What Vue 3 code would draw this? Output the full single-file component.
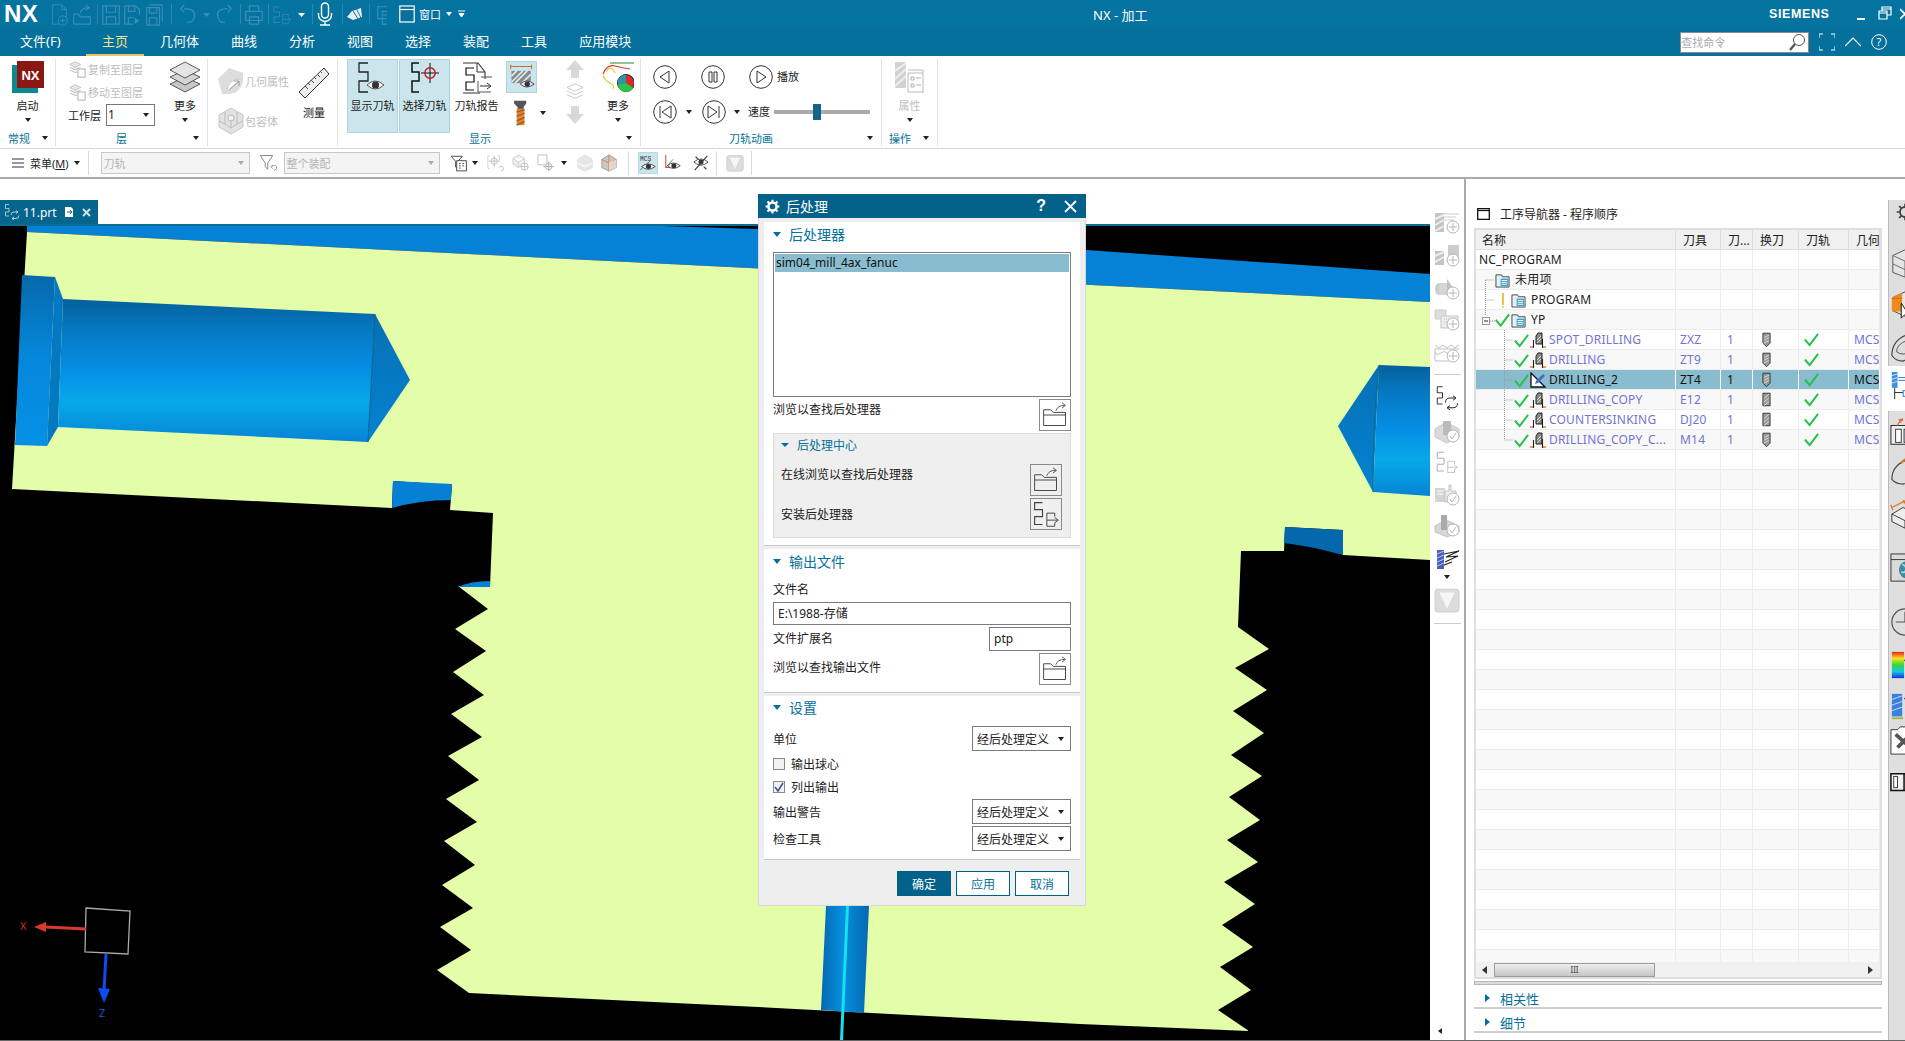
<script setup>
const qat = [
  ['i-new', 50], ['i-open', 72], ['i-save', 101], ['i-saveas', 123], ['i-saveall', 144],
  ['i-undo', 178], ['i-redo', 214], ['i-print', 244], ['i-tpout', 272], ['i-win', 375]
]
const qatSeps = [97, 171, 240, 268, 312, 342, 369]
const menus = ['主页', '几何体', '曲线', '分析', '视图', '选择', '装配', '工具', '应用模块']

const rows = [
  { kind: 'root', name: 'NC_PROGRAM' },
  { kind: 'unused', name: '未用项' },
  { kind: 'prog', name: 'PROGRAM' },
  { kind: 'yp', name: 'YP' },
  { kind: 'op', name: 'SPOT_DRILLING', tool: 'ZXZ', bit: 'i-bit' },
  { kind: 'op', name: 'DRILLING', tool: 'ZT9', bit: 'i-bit' },
  { kind: 'op', name: 'DRILLING_2', tool: 'ZT4', bit: 'i-bit', sel: true },
  { kind: 'op', name: 'DRILLING_COPY', tool: 'E12', bit: 'i-bit2' },
  { kind: 'op', name: 'COUNTERSINKING', tool: 'DJ20', bit: 'i-bit2' },
  { kind: 'op', name: 'DRILLING_COPY_C...', tool: 'M14', bit: 'i-bit', last: true }
]
const blank = Array.from({ length: 26 }, (_, i) => i)

const sideIcons = [
  { s: 'i-g1', h: 33 }, { s: 'i-g2', h: 33 }, { s: 'i-g3', h: 31 }, { s: 'i-g4', h: 32 }, { s: 'i-g5', h: 32 }
]
const sideIcons2 = [
  { s: 'i-tpsync', h: 34 }, { s: 'i-g6', h: 30 }, { s: 'i-tpoutg', h: 32 }, { s: 'i-g7', h: 32 }, { s: 'i-g8', h: 34 }, { s: 'i-gouge', h: 24 }
]

const railA = [
  { s: 'r-gear', m: -3 }, { s: 'r-cube', m: 21 }, { s: 'r-cubeo', m: 12 }, { s: 'r-bowl', m: 13 }
]
const railB = [
  { s: 'r-mach', m: 7 }, { s: 'r-bowlo', m: 7 }, { s: 'r-dim', m: 15 }, { s: 'r-globe', m: 23 },
  { s: 'r-clock', m: 24 }, { s: 'r-spec', m: 13 }, { s: 'r-bluet2', m: 12 }, { s: 'r-wrench', m: 3 }, { s: 'r-book', m: 13 }
]

const teethRight = '1238,627 1269,649 1235,668 1267,690 1233,711 1264,733 1231,755 1262,776 1229,797 1260,820 1227,840 1258,862 1224,882 1255,904 1222,925 1253,947 1220,967 1251,990 1218,1010 1249,1031'
const teethLeft = '469,993 437,970 471,950 440,927 473,908 442,885 475,865 444,841 477,822 446,799 479,780 448,756 482,737 451,714 484,695 453,672 486,651 455,629 488,609 458,586 490,587'
const body = `27,232 1430,302 1430,560 1343,555 1343,530 1285,527 1284,551 1241,551 ${teethRight} 1080,1024 758,1007 ${teethLeft} 493,513 450,510 452,485 393,481 392,508 12,489`
</script>

<template>
  <div class="app">
    <svg class="defs" aria-hidden="true">
      <defs>
        <linearGradient id="cyl" x1="0" y1="0" x2="0" y2="1">
          <stop offset="0" stop-color="#05609c"/><stop offset=".2" stop-color="#0677c0"/>
          <stop offset=".5" stop-color="#058fe6"/><stop offset=".72" stop-color="#07a9e8"/><stop offset="1" stop-color="#0684d6"/>
        </linearGradient>
        <linearGradient id="cbore" x1="0" y1="0" x2="0" y2="1">
          <stop offset="0" stop-color="#0668aa"/><stop offset=".5" stop-color="#0588dc"/><stop offset="1" stop-color="#0590e6"/>
        </linearGradient>
        <linearGradient id="cone" x1="0" y1="0" x2="0" y2="1">
          <stop offset="0" stop-color="#0670b4"/><stop offset="1" stop-color="#0582d2"/>
        </linearGradient>
        <linearGradient id="drill" x1="0" y1="0" x2="1" y2="0">
          <stop offset="0" stop-color="#0468b0"/><stop offset=".45" stop-color="#0590e0"/><stop offset="1" stop-color="#0468b0"/>
        </linearGradient>
        <linearGradient id="spec" x1="0" y1="0" x2="0" y2="1">
          <stop offset="0" stop-color="#e8201c"/><stop offset=".25" stop-color="#f5e51a"/><stop offset=".5" stop-color="#35d63c"/>
          <stop offset=".75" stop-color="#10c8e8"/><stop offset="1" stop-color="#1230e0"/>
        </linearGradient>

        <symbol id="i-tpshow" viewBox="0 0 32 32"><path d="M11 1H2v9h9v9H2v11h9" fill="none" stroke="#222" stroke-width="1.3"/><path d="M10 23q8-8 17 0q-9 8-17 0z" fill="#fff" stroke="#555"/><circle cx="18.5" cy="23" r="3.6" fill="#333"/></symbol>
        <symbol id="i-tpsel" viewBox="0 0 32 32"><path d="M10 1H3v9h7v9H3v11h7" fill="none" stroke="#111" stroke-width="1.5"/><path d="M12 11h18M21 1v20" stroke="#111" stroke-width="1"/><circle cx="21" cy="11" r="5.2" fill="none" stroke="#d0101c" stroke-width="1.4"/></symbol>
        <symbol id="i-tpreport" viewBox="0 0 32 32"><path d="M2 1h15l7 9v7M19 31H2z" fill="none" stroke="#333" stroke-width="1.1"/><path d="M16 1v9h8" fill="none" stroke="#333"/><path d="M13 6H5v7h8v7H5v8h8" fill="none" stroke="#111" stroke-width="1.2"/><path d="M20 15h11M17 19v11h13" fill="none" stroke="#555"/><path d="M19 24h10M26 21l4 3-4 3" fill="none" stroke="#333"/></symbol>
        <symbol id="i-tpout" viewBox="0 0 32 32"><path d="M12 3H3v8h9v8H3v9h9" fill="none" stroke="currentColor" stroke-width="1.3"/><path d="M17 15v15h9V26M17 15h9v4M17 23h12M26 20l4 3-4 3" fill="none" stroke="currentColor" stroke-width="1.1"/></symbol>
        <symbol id="i-tpoutg" viewBox="0 0 32 32"><path d="M12 3H3v8h9v8H3v9h9" fill="none" stroke="#aaa" stroke-width="1.3"/><path d="M17 15v15h9V26M17 15h9v4M17 23h12M26 20l4 3-4 3" fill="none" stroke="#bbb" stroke-width="1.1"/></symbol>
        <symbol id="i-tpsync" viewBox="0 0 32 32"><path d="M10 1H3v8h7v7H3v8h7" fill="none" stroke="currentColor" stroke-width="1.2"/><path d="M14 22q0-6 6-6h7M24 13l4 3-4 3M30 23q0 6-6 6h-7M20 32l-4-3 4-3" fill="none" stroke="currentColor" stroke-width="1.3"/></symbol>
        <symbol id="i-folder" viewBox="0 0 32 32"><path d="M3 10h8l3 3h14v15H3zM3 16h25" fill="none" stroke="#444" stroke-width="1.1"/><path d="M17 11q2-6 10-6M24 2l4 3-4 3" fill="none" stroke="#555" stroke-width="1.1"/></symbol>
        <symbol id="i-filt" viewBox="0 0 32 32"><path d="M2 4h20l-8 12v10l-4-4v-6z" fill="#fff" stroke="#888" stroke-width="1.6"/><path d="M20 22q6-4 8 0t-4 6M22 19l-3 3 3 3" fill="none" stroke="#888" stroke-width="1.4"/></symbol>
        <symbol id="i-filt2" viewBox="0 0 32 32"><path d="M2 4h20l-8 9v14l-4-4V13z" fill="#fff" stroke="#222" stroke-width="1.4"/><rect x="12" y="12" width="17" height="18" fill="#fff" stroke="#222" stroke-width="1.4"/><path d="M16 17h3M16 21h3M16 25h3M22 17h3M22 21h3" stroke="#222" stroke-width="1.4"/></symbol>

        <symbol id="i-new" viewBox="0 0 20 24"><path d="M2 1h10l5 5v10M2 1v21h7M12 1v5h5" fill="none" stroke="#3b8db4"/><circle cx="13" cy="18" r="5" fill="none" stroke="#3b8db4"/><path d="M10 18h6M13 15v6" stroke="#3b8db4"/></symbol>
        <symbol id="i-open" viewBox="0 0 20 24"><path d="M1 11h5l2 3h11v8H1zM8 10q2-6 9-6M14 1l4 3-4 3" fill="none" stroke="#3b8db4" stroke-width="1.2"/></symbol>
        <symbol id="i-save" viewBox="0 0 20 24"><path d="M1 2h18v20H1zM5 2v7h10V2M5 22v-8h10v8" fill="none" stroke="#3b8db4" stroke-width="1.3"/></symbol>
        <symbol id="i-saveas" viewBox="0 0 20 24"><path d="M1 2h12l4 4v6M1 2v20h9M5 2v6h7V2M5 22v-7h6" fill="none" stroke="#3b8db4" stroke-width="1.3"/><path d="M12 15l5 3-5 4z" fill="#3b8db4"/></symbol>
        <symbol id="i-saveall" viewBox="0 0 20 24"><path d="M5 1h14v18M2 4h14v19H2zM5 4v6h8V4M5 23v-8h8v8" fill="none" stroke="#3b8db4" stroke-width="1.2"/></symbol>
        <symbol id="i-undo" viewBox="0 0 20 24"><path d="M6 5Q18 5 17 13t-8 7M6 1L2 5l4 4" fill="none" stroke="#3b8db4" stroke-width="1.4"/></symbol>
        <symbol id="i-redo" viewBox="0 0 20 24"><path d="M14 5Q2 5 3 13t8 7M14 1l4 4-4 4" fill="none" stroke="#3b8db4" stroke-width="1.4"/></symbol>
        <symbol id="i-print" viewBox="0 0 20 24"><path d="M5 2h10v6H5zM1 8h18v10H1zM5 14h10v8H5z" fill="none" stroke="#3b8db4" stroke-width="1.3"/></symbol>
        <symbol id="i-win" viewBox="0 0 20 24"><path d="M2 3h11v13H2zM7 8h11v14H7zM7 12h11" fill="none" stroke="#3b8db4" stroke-width="1.2"/></symbol>

        <symbol id="i-stack" viewBox="0 0 32 32"><path d="M16 16L1 23l15 8 15-8z" fill="#c8c8c8" stroke="#333" stroke-width=".8"/><path d="M16 9L1 16l15 8 15-8z" fill="#d4d4d4" stroke="#333" stroke-width=".8"/><path d="M16 1L1 9l15 8 15-8z" fill="#e4e4e4" stroke="#333" stroke-width=".8"/></symbol>
        <symbol id="i-ruler" viewBox="0 0 32 32"><path d="M26 1l5 6L7 31l-6-6z" fill="#eee" stroke="#333" stroke-width="1"/><path d="M7 19l3 3M10 16l2 2M13 13l3 3M16 10l2 2M19 7l3 3M22 4l2 2" stroke="#444"/></symbol>
        <symbol id="i-copyl" viewBox="0 0 20 20"><path d="M8 2L2 5l6 3 6-3zM2 8l6 3 6-3M2 11l6 3 3-1" fill="#e8e8e8" stroke="#bbb"/><rect x="11" y="10" width="8" height="9" fill="#fff" stroke="#aaa"/></symbol>
        <symbol id="i-geom" viewBox="0 0 28 28"><path d="M12 1l14 5v8q-2 12-13 13H5L1 12z" fill="#ddd"/><path d="M10 24Q11 12 24 12" fill="#fff" stroke="#ccc"/><path d="M12 23l10-9M17 14h5v5" fill="none" stroke="#999"/></symbol>
        <symbol id="i-box" viewBox="0 0 28 28"><path d="M14 1l12 7v12l-12 7L2 20V8z" fill="#e2e2e2" stroke="#c6c6c6"/><path d="M8 5v12l6 4 6-4V5M2 14l6 3M26 14l-6 3M14 11v10" fill="none" stroke="#bbb"/><circle cx="14" cy="11" r="3" fill="#f3f3f3" stroke="#bbb"/></symbol>
        <symbol id="i-tphatch" viewBox="0 0 32 32"><rect x="4" y="9" width="22" height="14" fill="#888"/><path d="M4 15l6-6M8 23L22 9M16 23l10-10M4 22L17 9" stroke="#dbe9ee" stroke-width="2"/><path d="M3 4h24M3 2v5M27 2v5" fill="none" stroke="#c76b1e" stroke-width="1.1"/><path d="M14 24q7-7 16 0q-9 7-16 0z" fill="#dde" stroke="#444"/><circle cx="22" cy="24" r="3" fill="#333"/></symbol>
        <symbol id="i-endmill" viewBox="0 0 18 30"><path d="M1 1h14v3l-3 4v3H5V8L1 4z" fill="#555"/><rect x="4" y="10" width="9" height="19" fill="#e08535"/><path d="M4 14l9-3M4 19l9-4M4 24l9-4M4 29l9-4" stroke="#a15a1e" stroke-width="1.5"/></symbol>
        <symbol id="i-up" viewBox="0 0 20 20"><path d="M10 1L1 11h5v8h8v-8h5z" fill="#d8d8d8"/></symbol>
        <symbol id="i-down" viewBox="0 0 20 20"><path d="M10 19L1 9h5V1h8v8h5z" fill="#d8d8d8"/></symbol>
        <symbol id="i-lay" viewBox="0 0 20 20"><path d="M10 1L1 5l9 4 9-4zM1 9l9 4 9-4M1 13l9 4 9-4" fill="none" stroke="#c6c6c6"/></symbol>
        <symbol id="i-more" viewBox="0 0 32 32"><path d="M8 2h24" stroke="#208a30" stroke-width="1"/><path d="M1 13Q5 3 13 5t15 3" fill="none" stroke="#d63a2a" stroke-width="1.2"/><path d="M1 14q2 6 7 8t3 6M4 10q6-6 9 2" fill="none" stroke="#e8c83a" stroke-width="1.2"/><circle cx="24" cy="22" r="8.5" fill="#d72b28" stroke="#222"/><path d="M24 22V13.5a8.5 8.5 0 0 0-8.3 10z" fill="#2f93a8"/><path d="M24 22l-8.3 1.5a8.5 8.5 0 0 0 15.6 3.5z" fill="#23c84a"/></symbol>
        <symbol id="i-oper" viewBox="0 0 32 32"><rect x="1" y="1" width="11" height="26" rx="1" fill="#d2d2d2"/><path d="M1 10L12 2M1 18L12 8M1 25l11-10" stroke="#eee" stroke-width="2"/><path d="M14 9h15v24M14 12h15M14 12v19h15" fill="none" stroke="#bbb"/><path d="M17 16h3v3h-3zM17 23h3v3h-3zM22 17h5M22 24h5" fill="none" stroke="#b0b0b0"/></symbol>

        <symbol id="i-tb1" viewBox="0 0 20 20"><path d="M3 2H1v14h2M12 2h2v5" fill="none" stroke="#ccc"/><circle cx="8" cy="8" r="3.5" fill="none" stroke="#bbb"/><path d="M2 8h12M8 2v12" stroke="#bbb"/><path d="M13 15q3-3 5 0t-3 4" fill="none" stroke="#bbb"/></symbol>
        <symbol id="i-tb2" viewBox="0 0 20 20"><path d="M7 1l7 4v6l-7 4-6-4V5zM1 5l6 4 7-4M7 9v6" fill="#eee" stroke="#ccc"/><circle cx="14" cy="14" r="4" fill="#fff" stroke="#bbb"/><path d="M10 14h8M14 10v8" stroke="#bbb"/></symbol>
        <symbol id="i-tb3" viewBox="0 0 20 20"><path d="M1 1h10v11H1z" fill="none" stroke="#bbb"/><circle cx="13" cy="14" r="3.5" fill="#fff" stroke="#aaa"/><path d="M7 14h12M13 8v11" stroke="#aaa"/></symbol>
        <symbol id="i-tb4" viewBox="0 0 20 20"><path d="M10 1l8 5v9l-8 4-8-4V6z" fill="#e6e6e6" stroke="#ddd"/><path d="M2 10l8 4 8-4" stroke="#f5f5f5" stroke-width="2" fill="none"/></symbol>
        <symbol id="i-tb5" viewBox="0 0 20 20"><path d="M10 1l8 5v9l-8 4-8-4V6z" fill="#c8c8c8" stroke="#999"/><path d="M10 9v10M2 6l8 4 8-4M10 1v8" fill="none" stroke="#d08040"/><path d="M18 6v9l-8 4V9z" fill="#e8d5c5"/></symbol>
        <symbol id="i-mcs" viewBox="0 0 20 20"><text x="1" y="8" font-size="7" font-family="Liberation Mono" fill="#333">MCS</text><path d="M1 18L12 8" stroke="#2a9a40"/><path d="M3 14q7-6 15 0q-8 6-15 0z" fill="#eef" stroke="#444"/><circle cx="10.5" cy="14" r="2.8" fill="#333"/></symbol>
        <symbol id="i-eye" viewBox="0 0 20 20"><path d="M2 1v14h12" fill="none" stroke="#d03030"/><path d="M2 15L10 6" stroke="#2a9a40"/><path d="M4 13q6-6 14 0q-8 6-14 0z" fill="#fff" stroke="#444"/><circle cx="11" cy="13" r="2.8" fill="#333"/></symbol>
        <symbol id="i-noeye" viewBox="0 0 20 20"><path d="M2 9q8-7 16 0q-8 7-16 0z" fill="#fff" stroke="#444"/><circle cx="10" cy="9" r="2.8" fill="#333"/><path d="M3 18L17 2M4 3l3 3M13 14l3 3" stroke="#444" stroke-width="1.4"/></symbol>
        <symbol id="i-v" viewBox="0 0 24 24"><rect x="1" y="2" width="22" height="21" rx="3" fill="#dcdcdc" stroke="#cfcfcf"/><path d="M5 5h14l-7 15z" fill="#f6f6f6"/></symbol>

        <symbol id="i-g1" viewBox="0 0 26 24"><rect x="1" y="2" width="9" height="19" fill="#c4c4c4"/><path d="M1 8L10 4M1 14l9-5M1 20l9-5" stroke="#eee" stroke-width="2"/><path d="M10 3h15M10 6h12M10 9h10" stroke="#ccc"/><circle cx="19" cy="16" r="6" fill="#fff" stroke="#b5b5b5"/><path d="M15 16h8M19 12v8" stroke="#b5b5b5"/></symbol>
        <symbol id="i-g2" viewBox="0 0 26 24"><rect x="1" y="7" width="9" height="14" fill="#c4c4c4"/><path d="M1 12l9-4M1 18l9-5" stroke="#eee" stroke-width="2"/><rect x="14" y="1" width="11" height="13" fill="#ccc"/><circle cx="19" cy="16" r="6" fill="#fff" stroke="#b5b5b5"/><path d="M15 16h8M19 12v8" stroke="#b5b5b5"/></symbol>
        <symbol id="i-g3" viewBox="0 0 26 24"><ellipse cx="5" cy="12" rx="4" ry="6" fill="#ccc"/><rect x="5" y="6" width="8" height="12" fill="#d6d6d6"/><path d="M13 2l7 10-7 5z" fill="#c2c2c2"/><circle cx="19" cy="16" r="6" fill="#fff" stroke="#b5b5b5"/><path d="M15 16h8M19 12v8" stroke="#b5b5b5"/></symbol>
        <symbol id="i-g4" viewBox="0 0 26 24"><path d="M1 2h11v9H1z" fill="#ddd" stroke="#ccc"/><path d="M7 8h17v12H7z" fill="#eee" stroke="#c4c4c4"/><path d="M10 11h10M10 14h4" stroke="#bbb" stroke-dasharray="1 1"/><circle cx="19" cy="16" r="6" fill="#fff" stroke="#b5b5b5"/><path d="M15 16h8M19 12v8" stroke="#b5b5b5"/></symbol>
        <symbol id="i-g5" viewBox="0 0 26 24"><path d="M1 5l4 3 4-3 4 3 4-3 4 3 4-3M1 9h24M1 9v12h14" fill="none" stroke="#c0c0c0"/><path d="M1 13q3 3 6 0t6 0 6 0" fill="none" stroke="#c0c0c0"/><circle cx="19" cy="16" r="6" fill="#fff" stroke="#b5b5b5"/><path d="M15 16h8M19 12v8" stroke="#b5b5b5"/></symbol>
        <symbol id="i-g6" viewBox="0 0 26 24"><path d="M1 9l11-7 13 7v8l-12 6-12-6z" fill="#dadada" stroke="#c8c8c8"/><rect x="9" y="1" width="8" height="14" fill="#bbb"/><circle cx="19" cy="16" r="6" fill="#fff" stroke="#b5b5b5"/><path d="M16 16l2 3 4-6" fill="none" stroke="#b5b5b5"/></symbol>
        <symbol id="i-g7" viewBox="0 0 26 24"><rect x="1" y="6" width="10" height="14" fill="#d4d4d4"/><path d="M3 9h6M3 12h6" stroke="#fff"/><path d="M11 9h4V3h2v6h5v11H11z" fill="#eee" stroke="#c2c2c2"/><circle cx="19" cy="17" r="6" fill="#fff" stroke="#b5b5b5"/><path d="M16 17l2 3 4-6" fill="none" stroke="#b5b5b5"/></symbol>
        <symbol id="i-g8" viewBox="0 0 26 24"><path d="M1 12l11-6 13 6v6l-12 5-12-5z" fill="#d6d6d6" stroke="#c4c4c4"/><rect x="7" y="1" width="6" height="15" fill="#aaa"/><circle cx="19" cy="16" r="6" fill="#fff" stroke="#b5b5b5"/><path d="M16 16l2 3 4-6" fill="none" stroke="#b5b5b5"/></symbol>
        <symbol id="i-gouge" viewBox="0 0 26 24"><rect x="3" y="2" width="7" height="19" fill="#4c5fbd"/><path d="M3 6l7-3M3 10l7-3M3 14l7-3M3 18l7-3" stroke="#b8c4f0"/><path d="M10 6L25 3 12 9l12-1-13 6M10 17l8-3" fill="none" stroke="#222" stroke-width="1.2"/></symbol>

        <symbol id="i-fold" viewBox="0 0 16 16"><path d="M1 2h6l1 2h7v11H1z" fill="#e4f0f6" stroke="#444"/><rect x="6" y="6" width="8" height="8" fill="#3aa0c8"/><path d="M7 8h6M7 10h6M7 12h6" stroke="#fff"/></symbol>
        <symbol id="i-op" viewBox="0 0 16 16"><path d="M0 15h4M12 15h4" stroke="#e08535" stroke-width="1.300"/><path d="M3.500 8v8M12.500 7v9" stroke="#222" stroke-width="1.100"/><path d="M6 12V4l2-3h4v11z" fill="#8a8a8a" stroke="#222"/><path d="M7 8l4-4M7 11l4-4" stroke="#d8d8d8"/></symbol>
        <symbol id="i-opedit" viewBox="0 0 16 16"><path d="M1 1v14h14L8 8z" fill="#fff" stroke="#111" stroke-width="1.3"/><path d="M6 9l7-7 2 2-7 7-3 1z" fill="#3b6fc8"/></symbol>
        <symbol id="i-check" viewBox="0 0 16 16"><path d="M1 8l5 6L15 2" fill="none" stroke="#27c24a" stroke-width="2.100"/></symbol>
        <symbol id="i-bit" viewBox="0 0 10 16"><path d="M1 1h8v11l-4 4-4-4z" fill="#999" stroke="#222" stroke-width=".9"/><path d="M2 6l6-3M2 9l6-3M2 12l6-3" stroke="#ddd"/></symbol>
        <symbol id="i-bit2" viewBox="0 0 10 16"><path d="M1 1h8v14H1z" fill="#999" stroke="#222" stroke-width=".9"/><path d="M2 7l6-5M2 11l6-5M2 15l6-5" stroke="#ddd"/></symbol>

        <symbol id="r-gear" viewBox="-6 -6 36 36"><circle cx="12" cy="12" r="6" fill="none" stroke="#444" stroke-width="2.200"/><path d="M12 2v4M12 18v4M2 12h4M18 12h4M5 5l3 3M16 16l3 3M19 5l-3 3M8 16l-3 3" stroke="#444" stroke-width="2"/></symbol>
        <symbol id="r-cube" viewBox="0 0 32 32"><path d="M3 8l13-6 13 6v18l-13 5-13-5z" fill="#e4e4e4" stroke="#555"/><path d="M3 8l13 6 13-6M16 14v17M3 17l13 6 13-6" fill="none" stroke="#666"/></symbol>
        <symbol id="r-cubeo" viewBox="0 0 32 32"><path d="M3 8l13-6 13 6v14l-13 6-13-6z" fill="#e8e8e8" stroke="#444"/><path d="M2 8l11-5v20H2z" fill="#ef8a1d"/><path d="M2 9h11" stroke="#c96a0a"/><path d="M12 14v16l4-4 5 2z" fill="#fff" stroke="#111"/></symbol>
        <symbol id="r-bowl" viewBox="0 0 32 32"><path d="M2 24Q2 8 18 2l12 0v20L14 30Q6 30 2 24z" fill="#ddd" stroke="#444" stroke-width="1.200"/><path d="M7 20q0-8 11-12M7 20q7 5 14 0" fill="none" stroke="#555"/></symbol>
        <symbol id="r-flow" viewBox="0 0 32 32"><rect x="2" y="1" width="6" height="17" fill="#3e8fe0"/><path d="M2 5l6-2M2 9l6-2M2 13l6-2" stroke="#cfe6ff"/><path d="M9 7h12M9 10h8" stroke="#2277cc"/><path d="M5 18v12M5 23h9" stroke="#222"/><rect x="14" y="21" width="8" height="6" fill="none" stroke="#2277cc"/></symbol>
        <symbol id="r-mach" viewBox="0 0 32 32"><rect x="1" y="8" width="24" height="20" fill="#eee" stroke="#222"/><rect x="6" y="12" width="6" height="14" fill="#fff" stroke="#333"/><rect x="15" y="12" width="6" height="14" fill="#cfe3f0" stroke="#333"/><path d="M8 8q2-5 6-6M14 1l-4 1 2 3" fill="none" stroke="#e07030" stroke-width="1.400"/></symbol>
        <symbol id="r-bowlo" viewBox="0 0 32 32"><path d="M2 26Q2 12 16 6l14 2v18L14 31Q6 31 2 26z" fill="#ddd" stroke="#444" stroke-width="1.200"/><path d="M12 9q3-5 6-5M18 1v6" fill="none" stroke="#e07a20" stroke-width="2"/></symbol>
        <symbol id="r-dim" viewBox="0 0 32 32"><path d="M2 15l12-7 14 7v8l-12 7-14-7z" fill="#eee" stroke="#333"/><path d="M2 15l14 7 12-7M16 22v8" fill="none" stroke="#333"/><path d="M2 8L16 1M1 5l2 6M14 0l3 5" fill="none" stroke="#e07a20" stroke-width="1.400"/></symbol>
        <symbol id="r-globe" viewBox="0 0 32 32"><rect x="1" y="1" width="31" height="29" fill="#dadada" stroke="#333"/><path d="M1 7h31" stroke="#333"/><circle cx="19" cy="18" r="9.500" fill="#3c8aa0"/><path d="M13 12q5 2 4 6t-5 2M22 11q4 3 2 8" stroke="#a9d3dd" stroke-width="2" fill="none"/></symbol>
        <symbol id="r-clock" viewBox="0 0 32 32"><circle cx="16" cy="16" r="14" fill="none" stroke="#555" stroke-width="1.300"/><path d="M16 5v11H6" fill="none" stroke="#555" stroke-width="1.300"/></symbol>
        <symbol id="r-spec" viewBox="0 0 32 32"><rect x="2" y="2" width="13" height="28" fill="url(#spec)"/><path d="M16 10l10 10-6 6" stroke="#111" stroke-width="3" fill="none"/></symbol>
        <symbol id="r-bluet2" viewBox="0 0 32 32"><rect x="2" y="2" width="11" height="24" fill="#3d7fdc"/><path d="M2 8l11-4M2 14l11-4M2 20l11-4" stroke="#c7e0f8"/><path d="M2 28h12" stroke="#a0b840" stroke-width="2"/><path d="M16 6l10 10-6 6" stroke="#111" stroke-width="3" fill="none"/></symbol>
        <symbol id="r-wrench" viewBox="0 0 32 32"><path d="M1 5h7l3-3h8l3 3h9v26H1z" fill="#fff" stroke="#333"/><path d="M6 10l18 16M24 8L8 24" stroke="#555" stroke-width="4"/></symbol>
        <symbol id="r-book" viewBox="0 0 32 32"><path d="M1 6h14v18H1zM15 6h14v18H15z" fill="#f2f2f2" stroke="#111" stroke-width="1.600"/><rect x="4" y="9" width="4" height="12" fill="#fff" stroke="#333"/><rect x="18" y="3" width="8" height="10" fill="#f0cf3a"/></symbol>
      </defs>
    </svg>

    <!-- title bar -->
    <header class="titlebar">
      <span class="logo">NX</span>
      <svg class="qat" width="342" height="28" viewBox="45 0 342 28">
        <line v-for="x in qatSeps" :key="x" :x1="x + .5" :x2="x + .5" y1="4" y2="24" stroke="#2a87ae"/>
        <use v-for="[id, x] in qat" :key="id" :href="'#' + id" :x="x" y="4" width="20" height="22" color="#3b8db4"/>
        <path d="M203 13h7l-3.500 4z" fill="#3b8db4"/>
        <path d="M298 13h7l-3.500 4z" fill="#fff"/>
        <path d="M325 3a3.500 3.500 0 0 1 3.500 3.500v8a3.500 3.500 0 0 1-7 0v-8A3.500 3.500 0 0 1 325 3zM318.500 13v2a6.500 6.500 0 0 0 13 0v-2M325 21v4M320 25h10" fill="none" stroke="#fff" stroke-width="1.400"/>
        <path d="M347 17l5-6 9-3 1 9-9 3z" fill="#e8f2f6"/><path d="M352 9l6 10M356 8l5 10" stroke="#1b6f93"/>
      </svg>
      <svg class="winicon" width="16" height="18" viewBox="0 0 16 18"><rect x=".8" y="1" width="14.400" height="16" fill="#0a6e98" stroke="#fff" stroke-width="1.200"/><path d="M1 4.500h14" stroke="#fff" stroke-width="1.200"/></svg>
      <span class="wintxt">窗口</span>
      <i class="caret white wincaret"></i>
      <svg class="lastcaret" width="8" height="8" viewBox="0 0 8 8"><path d="M0 1h7M1 3.500h5L3.500 7z" stroke="#fff" fill="#fff"/></svg>
      <span class="apptitle">NX - 加工</span>
      <span class="siemens">SIEMENS</span>
      <span class="wbtn min"></span>
      <svg class="wres" width="14" height="14" viewBox="0 0 14 14"><path d="M1 5h8v8H1zM4 5V1h9v8h-4M1 7h8M4 3h9" fill="none" stroke="#fff" stroke-width="1.200"/></svg>
      <svg class="wclose" width="10" height="12" viewBox="0 0 10 12"><path d="M0 1l10 10M10 1L0 11" stroke="#fff" stroke-width="1.600"/></svg>
    </header>

    <!-- menu bar -->
    <nav class="menubar">
      <span class="file">文件(F)</span>
      <span v-for="(m, i) in menus" :key="m" class="tab" :class="{ on: i === 0 }">{{ m }}</span>
      <div class="searchbox"><span>查找命令</span>
        <svg width="18" height="18" viewBox="0 0 18 18"><circle cx="11" cy="7" r="5.500" fill="#fff" stroke="#555"/><path d="M7 11l-5 6" stroke="#555" stroke-width="2.200"/></svg>
      </div>
      <svg class="mi exp" width="16" height="18" viewBox="0 0 16 18"><path d="M0 5V1h4M12 1h4v4M16 13v4h-4M4 17H0v-4" fill="none" stroke="#fff"/></svg>
      <svg class="mi up" width="16" height="10" viewBox="0 0 16 10"><path d="M0 9l8-8 8 8" fill="none" stroke="#fff" stroke-width="1.100"/></svg>
      <svg class="mi hp" width="16" height="16" viewBox="0 0 16 16"><circle cx="8" cy="8" r="7.300" fill="none" stroke="#fff"/><text x="8" y="12" text-anchor="middle" fill="#fff" font-size="11" font-family="Noto Sans">?</text></svg>
    </nav>

    <!-- ribbon -->
    <section class="ribbon">
      <div class="grp g1">
        <div class="gbody center">
          <svg class="ic32" width="32" height="32" viewBox="0 0 32 32"><rect y="4" width="26" height="28" fill="#0d8a8f"/><rect x="5" width="27" height="27" fill="#8c1712"/><text x="18.500" y="19" text-anchor="middle" font-size="13" font-weight="700" font-family="Liberation Sans" fill="#fff">NX</text></svg>
          <span class="lb mt5">启动</span><i class="caret"></i>
        </div>
        <div class="gfoot"><em>常规</em><span></span><i class="caret"></i></div>
      </div>
      <div class="grp g2">
        <div class="gbody row">
          <div class="layers">
            <div class="mini dim"><svg width="18" height="18"><use href="#i-copyl"/></svg>复制至图层</div>
            <div class="mini dim"><svg width="18" height="18"><use href="#i-copyl"/></svg>移动至图层</div>
            <div class="mini"><span>工作层</span><span class="combo">1<i class="caret"></i></span></div>
          </div>
          <div class="more center"><svg width="32" height="32"><use href="#i-stack"/></svg><span class="lb mt5">更多</span><i class="caret"></i></div>
        </div>
        <div class="gfoot"><span></span><em>层</em><i class="caret"></i></div>
      </div>
      <div class="grp g3">
        <div class="gbody row">
          <div class="geo">
            <div class="geoitem dim"><svg width="28" height="28"><use href="#i-geom"/></svg>几何属性</div>
            <div class="geoitem dim"><svg width="28" height="28"><use href="#i-box"/></svg>包容体</div>
          </div>
          <div class="center meas"><svg width="32" height="32"><use href="#i-ruler"/></svg><span class="lb mt6">测量</span></div>
        </div>
      </div>
      <div class="grp g4">
        <div class="gbody row">
          <div class="bigbtn on"><svg width="32" height="32"><use href="#i-tpshow"/></svg><span class="lb">显示刀轨</span></div>
          <div class="bigbtn on"><svg width="32" height="32"><use href="#i-tpsel"/></svg><span class="lb">选择刀轨</span></div>
          <div class="bigbtn"><svg width="32" height="32"><use href="#i-tpreport"/></svg><span class="lb">刀轨报告</span></div>
          <div class="stackbtns">
            <div class="smallon"><svg width="28" height="28"><use href="#i-tphatch"/></svg></div>
            <div class="millrow"><svg width="16" height="26"><use href="#i-endmill"/></svg><i class="caret"></i></div>
          </div>
          <div class="ups"><svg width="20" height="20"><use href="#i-up"/></svg><svg width="20" height="18"><use href="#i-lay"/></svg><svg width="20" height="20"><use href="#i-down"/></svg></div>
          <div class="center more2"><svg width="32" height="32"><use href="#i-more"/></svg><span class="lb mt5">更多</span><i class="caret"></i></div>
        </div>
        <div class="gfoot"><span></span><em>显示</em><i class="caret"></i></div>
      </div>
      <div class="grp g5">
        <div class="gbody anim">
          <div class="arow">
            <svg width="24" height="24" viewBox="0 0 24 24"><circle cx="12" cy="12" r="11.300" fill="none" stroke="#333"/><path d="M16 6v12L7 12z" fill="none" stroke="#333"/></svg>
            <svg class="a2" width="24" height="24" viewBox="0 0 24 24"><circle cx="12" cy="12" r="11.300" fill="none" stroke="#333"/><path d="M8 7h3v10H8zM13 7h3v10h-3z" fill="none" stroke="#333"/></svg>
            <svg class="a2" width="24" height="24" viewBox="0 0 24 24"><circle cx="12" cy="12" r="11.300" fill="none" stroke="#333"/><path d="M8 6v12l9-6z" fill="none" stroke="#333"/></svg>
            <span class="lb play">播放</span>
          </div>
          <div class="arow r2">
            <svg width="24" height="24" viewBox="0 0 24 24"><circle cx="12" cy="12" r="11.300" fill="none" stroke="#333"/><path d="M7 6v12M18 6v12L9 12z" fill="none" stroke="#333"/></svg>
            <i class="caret ca"></i>
            <svg class="a3" width="24" height="24" viewBox="0 0 24 24"><circle cx="12" cy="12" r="11.300" fill="none" stroke="#333"/><path d="M17 6v12M6 6v12l9-6z" fill="none" stroke="#333"/></svg>
            <i class="caret ca cb2"></i>
            <span class="lb speed">速度</span>
            <span class="slider"><b></b></span>
          </div>
        </div>
        <div class="gfoot"><span></span><em>刀轨动画</em><i class="caret"></i></div>
      </div>
      <div class="grp g6">
        <div class="gbody center"><svg width="32" height="32"><use href="#i-oper"/></svg><span class="lb mt5 disabled">属性</span><i class="caret"></i></div>
        <div class="gfoot"><em>操作</em><span></span><i class="caret"></i></div>
      </div>
    </section>

    <!-- selection bar -->
    <section class="selbar">
      <svg class="burger" width="12" height="10" viewBox="0 0 12 10"><path d="M0 1h12M0 5h12M0 9h12" stroke="#333"/></svg>
      <span class="menulb">菜单(<u>M</u>)</span><i class="caret"></i>
      <span class="vsep s1"></span>
      <span class="pick s-a">刀轨<i class="caret gray"></i></span>
      <svg class="f1" width="20" height="20"><use href="#i-filt"/></svg>
      <span class="pick s-b">整个装配<i class="caret gray"></i></span>
      <svg class="t0" width="18" height="20"><use href="#i-filt2"/></svg><i class="caret k2"></i>
      <svg class="t1" width="18" height="18"><use href="#i-tb1"/></svg>
      <svg class="t2" width="18" height="18"><use href="#i-tb2"/></svg>
      <svg class="t2" width="18" height="18"><use href="#i-tb3"/></svg><i class="caret k3"></i>
      <svg class="t3" width="18" height="18"><use href="#i-tb4"/></svg>
      <svg class="t4" width="18" height="18"><use href="#i-tb5"/></svg>
      <span class="vsep s2"></span>
      <span class="hl"><svg width="18" height="18"><use href="#i-mcs"/></svg></span>
      <svg class="t5" width="18" height="18"><use href="#i-eye"/></svg>
      <svg class="t6" width="18" height="18"><use href="#i-noeye"/></svg>
      <span class="vsep s3"></span>
      <svg class="t7" width="18" height="18"><use href="#i-v"/></svg>
      <span class="vsep s4"></span>
    </section>

    <!-- workspace -->
    <main class="work">
      <div class="leftcol">
        <div class="tabstrip">
          <div class="doctab">
            <svg class="tabicon" width="16" height="16"><use href="#i-tpsync"/></svg>
            <span>11.prt</span>
            <svg width="10" height="12" viewBox="0 0 10 12"><path d="M1 1h6l2 2v8H1z" fill="#fff"/><path d="M3 6h5M6 4l2 2-2 2" stroke="#0b6a90" fill="none"/></svg>
            <svg class="tx" width="9" height="9" viewBox="0 0 9 9"><path d="M1 1l7 7M8 1L1 8" stroke="#cfe3ea" stroke-width="2"/></svg>
          </div>
        </div>
        <div class="canvas">
          <svg class="scene" width="1430" height="816" viewBox="0 224 1430 816">
            <rect x="0" y="224" width="1430" height="816" fill="#000"/>
            <polygon points="27,232 27,226 630,225 758,229 1086,250 1430,274 1430,302" fill="#0581d6"/>
            <polygon :points="body" fill="#e3fda9"/>
            <polygon points="22,275 55,277 47,446 15,445" fill="url(#cbore)"/>
            <polygon points="55,277 63,299 58,427 47,446" fill="#0578c2"/>
            <polygon points="63,299 375,314 368,442 58,427" fill="url(#cyl)"/>
            <polygon points="375,314 410,380 368,442" fill="url(#cone)"/>
            <path d="M375 314L368 442" stroke="#0a5f8f"/>
            <polygon points="1379,365 1338,426 1373,492" fill="url(#cone)"/>
            <polygon points="1379,365 1430,367 1430,496 1373,492" fill="url(#cyl)"/>
            <path d="M1379 365Q1372 430 1373 492" stroke="#0a6f8f" fill="none"/>
            <path d="M393 481L452 484L451 500Q420 500 392 508Z" fill="#0580d4"/>
            <path d="M1285 527L1343 530L1343 555Q1310 546 1284 543Z" fill="#0567ac"/>
            <path d="M458 587Q470 581 490 581V587Z" fill="#0581d6"/>
            <polygon points="826,906 869,906 864,1013 821,1010" fill="url(#drill)"/>
            <polygon points="846,906 849,906 843,1040 840,1040" fill="#14e0f0"/>
            <rect x="0" y="224" width="1430" height="2" fill="#0a6e94"/>
            <polygon points="86,908 130,911 128,954 85,952" fill="none" stroke="#aaa" stroke-width="1.300"/>
            <path d="M86 929L46 927" stroke="#d93a2e" stroke-width="3"/>
            <polygon points="46,922 46,932 34,927" fill="#d93a2e"/>
            <text x="20" y="930" font-size="11" font-family="Noto Sans" fill="#c83228">X</text>
            <path d="M106 954L104 990" stroke="#0a4cf5" stroke-width="3"/>
            <polygon points="98,988 110,989 104,1003" fill="#0a4cf5"/>
            <text x="99" y="1017" font-size="11" font-family="Noto Sans" fill="#1a50d0">Z</text>
          </svg>
        </div>
      </div>

      <aside class="sidetools">
        <svg v-for="it in sideIcons" :key="it.s" class="st" width="26" height="24" :style="{ marginBottom: it.h - 24 + 'px' }"><use :href="'#' + it.s"/></svg>
        <hr class="sh"/>
        <svg v-for="it in sideIcons2" :key="it.s" class="st" width="26" height="24" :style="{ marginBottom: it.h - 24 + 'px' }"><use :href="'#' + it.s"/></svg>
        <i class="caret sc"></i>
        <svg class="stv" width="26" height="26"><use href="#i-v"/></svg>
        <hr class="sh s2b"/>
        <svg class="tinyleft" width="4" height="6" viewBox="0 0 4 6"><path d="M4 0v6L0 3z" fill="#222"/></svg>
      </aside>

      <section class="nav">
        <div class="navtitle">
          <svg width="13" height="12" viewBox="0 0 13 12"><path d="M.7.7h11.600v10.600H.7z" fill="#fff" stroke="#111" stroke-width="1.300"/><path d="M1 2.500h11" stroke="#111" stroke-width="1.200"/></svg>
          <span>工序导航器 - 程序顺序</span>
        </div>
        <div class="tbl">
          <div class="thead">
            <span class="col0">名称</span><span class="col1">刀具</span><span class="col2">刀...</span><span class="col3">换刀</span><span class="col4">刀轨</span><span class="col5">几何</span>
          </div>
          <div class="tbody">
            <div v-for="(r, i) in rows" :key="r.name" class="tr" :class="{ alt: i % 2 === 1, chosen: r.sel }">
              <span class="col0 nm" :class="r.kind">
                <svg v-if="r.kind === 'unused'" class="pf" width="36" height="20" viewBox="0 0 36 20">
                  <path d="M9.500 10V20M9.500 10H18" stroke="#999" stroke-dasharray="1 1"/><use href="#i-fold" x="19" y="3" width="15" height="15"/>
                </svg>
                <svg v-else-if="r.kind === 'prog'" class="pf" width="52" height="20" viewBox="0 0 52 20">
                  <path d="M9.500 0V20M9.500 10H18" stroke="#999" stroke-dasharray="1 1"/><path d="M27 3v12" stroke="#f0bf4c" stroke-width="2"/><circle cx="27" cy="17" r="1" fill="#f0bf4c"/><use href="#i-fold" x="35" y="3" width="15" height="15"/>
                </svg>
                <svg v-else-if="r.kind === 'yp'" class="pf" width="52" height="20" viewBox="0 0 52 20">
                  <path d="M9.500 0V6" stroke="#999" stroke-dasharray="1 1"/><rect x="6.500" y="7.500" width="7" height="7" fill="#fff" stroke="#999"/><path d="M8 11h4" stroke="#222"/><path d="M14 11h5" stroke="#999" stroke-dasharray="1 1"/><use href="#i-check" x="19" y="2" width="15" height="16"/><use href="#i-fold" x="35" y="3" width="15" height="15"/>
                </svg>
                <svg v-else-if="r.kind === 'op'" class="pf" width="71" height="20" viewBox="0 0 71 20">
                  <path :d="r.last ? 'M28.500 0V10H37' : 'M28.500 0V20M28.500 10H37'" fill="none" stroke="#999" stroke-dasharray="1 1"/><use href="#i-check" x="38" y="3" width="15" height="15"/><use :href="r.sel ? '#i-opedit' : '#i-op'" x="54" y="2" width="16" height="16"/>
                </svg>
                <b class="nt">{{ r.name }}</b>
              </span>
              <span class="col1 v">{{ r.tool }}</span>
              <span class="col2 v">{{ r.tool ? '1' : '' }}</span>
              <span class="col3 ctr bitc"><svg v-if="r.bit" width="9" height="15"><use :href="'#' + r.bit"/></svg></span>
              <span class="col4 ctr chkc"><svg v-if="r.bit" width="15" height="15"><use href="#i-check"/></svg></span>
              <span class="col5 v">{{ r.tool ? 'MCS' : '' }}</span>
            </div>
            <div v-for="b in blank" :key="b" class="tr" :class="{ alt: (b + 10) % 2 === 1 }">
              <span class="col0"></span><span class="col1"></span><span class="col2"></span><span class="col3"></span><span class="col4"></span><span class="col5"></span>
            </div>
          </div>
          <div class="hscroll">
            <svg width="6" height="8" viewBox="0 0 6 8"><path d="M5 0v8L0 4z" fill="#333"/></svg>
            <span class="thumb">III</span>
            <svg class="rarrow" width="6" height="8" viewBox="0 0 6 8"><path d="M1 0v8l5-4z" fill="#333"/></svg>
          </div>
        </div>
        <div class="thickline"></div>
        <div class="pane"><i class="tri"></i>相关性</div>
        <div class="pane"><i class="tri"></i>细节</div>
      </section>

      <aside class="rail">
        <div class="railblock">
          <svg v-for="it in railA" :key="it.s" class="ri" width="30" height="30" :style="{ marginTop: it.m + 'px' }" viewBox="0 0 32 32"><use :href="'#' + it.s"/></svg>
        </div>
        <div class="railwhite"><svg class="ri" width="30" height="30" viewBox="0 0 32 32"><use href="#r-flow"/></svg></div>
        <div class="railblock grow">
          <svg v-for="it in railB" :key="it.s" class="ri" width="30" height="30" :style="{ marginTop: it.m + 'px' }" viewBox="0 0 32 32"><use :href="'#' + it.s"/></svg>
        </div>
      </aside>
    </main>
    <div class="bottomline"></div>

    <!-- floating dialog -->
    <div class="dlg">
      <div class="dlg-title">
        <svg width="15" height="15" viewBox="0 0 24 24"><circle cx="12" cy="12" r="6.500" fill="none" stroke="#fff" stroke-width="4"/><path d="M12 1v4M12 19v4M1 12h4M19 12h4M4 4l3 3M17 17l3 3M20 4l-3 3M7 17l-3 3" stroke="#fff" stroke-width="3.400"/></svg>
        <span>后处理</span>
        <b class="q">?</b>
        <svg class="x" width="13" height="13" viewBox="0 0 13 13"><path d="M1 1l11 11M12 1L1 12" stroke="#fff" stroke-width="1.800"/></svg>
      </div>
      <div class="dlg-body">
        <section class="sec s1h">
          <h4 class="head"><i class="dn"></i>后处理器</h4>
          <div class="listbox"><div class="li">sim04_mill_4ax_fanuc</div></div>
          <div class="brow">
            <span>浏览以查找后处理器</span>
            <button class="ibtn"><svg width="28" height="28" viewBox="0 0 32 32"><use href="#i-folder"/></svg></button>
          </div>
          <div class="center-sec">
            <h5 class="head sub"><i class="dn"></i>后处理中心</h5>
            <div class="brow b1"><span>在线浏览以查找后处理器</span>
              <button class="ibtn"><svg width="28" height="28" viewBox="0 0 32 32"><use href="#i-folder"/></svg></button></div>
            <div class="brow b2"><span>安装后处理器</span>
              <button class="ibtn"><svg width="28" height="28" viewBox="0 0 32 32" color="#444"><use href="#i-tpout"/></svg></button></div>
          </div>
        </section>
        <section class="sec s2h">
          <h4 class="head"><i class="dn"></i>输出文件</h4>
          <div class="flab">文件名</div>
          <div class="inp">E:\1988-存储</div>
          <div class="brow ext"><span>文件扩展名</span><div class="inp small">ptp</div></div>
          <div class="brow br2"><span>浏览以查找输出文件</span>
            <button class="ibtn"><svg width="28" height="28" viewBox="0 0 32 32"><use href="#i-folder"/></svg></button></div>
        </section>
        <section class="sec s3h">
          <h4 class="head"><i class="dn"></i>设置</h4>
          <div class="brow r25"><span>单位</span><span class="dd">经后处理定义<i class="caret"></i></span></div>
          <label class="cb first"><i class="box"></i>输出球心</label>
          <label class="cb"><i class="box"><svg width="10" height="10" viewBox="0 0 10 10"><path d="M1 5l3 4 5-8" fill="none" stroke="#3a4f9c" stroke-width="1.500"/></svg></i>列出输出</label>
          <div class="brow r25 m1"><span>输出警告</span><span class="dd">经后处理定义<i class="caret"></i></span></div>
          <div class="brow r25 m2"><span>检查工具</span><span class="dd">经后处理定义<i class="caret"></i></span></div>
        </section>
        <footer class="actions">
          <button class="primary">确定</button><button>应用</button><button>取消</button>
        </footer>
      </div>
    </div>
  </div>
</template>

<style>
html, body { margin: 0; padding: 0; background: #fff; overflow: hidden; }
</style>

<style scoped>
* { box-sizing: border-box; }
.app { position: relative; width: 1905px; height: 1041px; overflow: hidden; background: #fff; color: #222; font: 12px "Noto Sans", "Noto Sans CJK SC", sans-serif; }
.defs { position: absolute; width: 0; height: 0; }
i { display: block; font-style: normal; }
.caret { display: inline-block; width: 0; height: 0; border: 3px solid transparent; border-top: 4px solid #222; border-bottom: 0; flex: none; }
.caret.white { border-top-color: #fff; }
.caret.gray { border-top-color: #aaa; }

.titlebar { display: flex; align-items: center; height: 28px; background: #05739f; color: #fff; }
.titlebar > * { flex: none; }
.logo { width: 45px; padding-left: 4px; font: 700 24px/28px "Liberation Sans", sans-serif; letter-spacing: .5px; }
.winicon { margin-left: 12px; }
.wintxt { margin-left: 4px; font-size: 11px; white-space: nowrap; }
.wincaret { margin-left: 5px; }
.lastcaret { margin-left: 6px; }
.apptitle { margin-left: 627px; width: 676px; font-size: 13px; white-space: nowrap; }
.siemens { width: 88px; font: 700 12.500px "Liberation Sans", sans-serif; letter-spacing: .6px; white-space: nowrap; }
.wbtn.min { width: 8px; height: 2px; background: #fff; margin-top: 10px; }
.wres { margin-left: 13px; margin-top: -2px; }
.wclose { margin-left: 8px; }

.menubar { display: flex; align-items: center; height: 28px; background: #05709b; color: #fff; font-size: 13px; }
.menubar > * { flex: none; }
.file { width: 86px; height: 28px; line-height: 26px; padding-left: 20px; white-space: nowrap; }
.tab { position: relative; height: 28px; padding: 0 16px; line-height: 26px; white-space: nowrap; }
.tab.on { color: #f4e08f; border-bottom: 2px solid #e5c86a; }
.searchbox { display: flex; align-items: center; justify-content: space-between; margin-left: 1033px; width: 129px; height: 21px; padding: 0 2px 0 0; background: #fff; border: 1px solid #8a8a8a; color: #aaa; font-size: 11px; }
.mi.exp { margin-left: 10px; }
.mi.up { margin-left: 10px; }
.mi.hp { margin-left: 10px; }

.ribbon { display: flex; height: 93px; background: #fff; border-bottom: 1px solid #d8d8d8; padding-top: 3px; }
.grp { display: flex; flex-direction: column; height: 87px; border-right: 1px solid #e2e2e2; flex: none; }
.g1 { width: 56px; } .g2 { width: 152px; } .g3 { width: 130px; } .g4 { width: 303px; } .g5 { width: 241px; } .g6 { width: 56px; }
.gbody { flex: 1; min-height: 0; }
.gbody.center, .center { display: flex; flex-direction: column; align-items: center; padding-top: 2px; }
.gbody.row { display: flex; }
.gfoot { height: 17px; display: grid; align-items: center; padding: 0 8px 0 6px; color: #05709b; font-size: 11px; }
.gfoot em { font-style: normal; }
.gfoot .caret { justify-self: end; }
.g1 .gfoot { grid-template-columns: auto 1fr auto; padding: 0 7px 0 8px; }
.g2 .gfoot { grid-template-columns: 54px auto 1fr; }
.g4 .gfoot { grid-template-columns: 125px auto 1fr; }
.g5 .gfoot { grid-template-columns: 82px auto 1fr; }
.g6 .gfoot { grid-template-columns: auto 1fr auto; padding-left: 7px; }
.lb { font-size: 11px; line-height: 14px; white-space: nowrap; color: #222; }
.lb.disabled { color: #c0c0c0; }
.mt5 { margin-top: 6px; } .mt6 { margin-top: 7px; }
.lb + .caret { margin-top: 5px; }

.layers { width: 109px; margin-top: -2px; padding-left: 12px; display: flex; flex-direction: column; }
.mini { display: flex; align-items: center; gap: 2px; height: 23px; font-size: 11px; white-space: nowrap; }
.mini.dim, .geoitem.dim { color: #bdbdbd; }
.combo { display: flex; align-items: center; justify-content: space-between; width: 49px; height: 22px; margin-left: 3px; padding: 0 5px 0 1px; border: 1px solid #777; font-size: 12px; color: #222; }
.more { width: 40px; }
.geo { width: 90px; padding: 2px 0 0 9px; }
.geoitem { display: flex; align-items: center; height: 40px; font-size: 11px; white-space: nowrap; }
.meas { width: 32px; padding-top: 8px; }

.g4 .gbody { padding-left: 9px; }
.bigbtn { display: flex; flex-direction: column; align-items: center; width: 51px; height: 74px; margin-right: 1px; padding-top: 2px; border: 1px solid transparent; }
.bigbtn .lb { margin-top: 5px; }
.bigbtn.on { background: #cbe5ec; border-color: #aed5de; }
.stackbtns { width: 58px; margin-left: 3px; }
.smallon { width: 31px; height: 32px; display: flex; align-items: center; justify-content: center; background: #cbe5ec; border: 1px solid #aed5de; margin-top: 2px; }
.millrow { display: flex; align-items: center; height: 36px; padding: 4px 0 0 7px; }
.millrow .caret { margin-left: 11px; }
.ups { display: flex; flex-direction: column; align-items: center; width: 20px; margin-left: 1px; gap: 4px; }
.more2 { width: 40px; margin-left: 13px; }

.anim { padding: 6px 0 0 12px; }
.arow { display: flex; align-items: center; height: 24px; }
.arow.r2 { margin-top: 11px; }
.a2 { margin-left: 24px; }
.a3 { margin-left: 10px; }
.play { margin-left: 4px; }
.ca { margin-left: 9px; }
.cb2 { margin-left: 8px; }
.speed { margin-left: 8px; }
.slider { position: relative; display: block; width: 96px; height: 4px; margin-left: 4px; background: #aaa; }
.slider b { position: absolute; left: 39px; top: -6px; width: 8px; height: 16px; background: #12648a; }

.selbar { display: flex; align-items: center; height: 30px; border-bottom: 2px solid #ababab; background: #fff; padding-left: 12px; padding-bottom: 1px; }
.burger { flex: none; }
.menulb { margin-left: 6px; font-size: 11px; white-space: nowrap; }
.menulb + .caret { margin-left: 5px; }
.vsep { width: 1px; height: 24px; background: #dcdcdc; flex: none; }
.vsep.s1 { margin-left: 8px; }
.pick { display: flex; align-items: center; justify-content: space-between; height: 22px; padding: 0 5px 0 2px; background: #f4f4f4; border: 1px solid #c8c8c8; color: #b5b5b5; font-size: 11px; flex: none; }
.s-a { width: 149px; margin-left: 12px; }
.f1 { margin-left: 9px; flex: none; }
.s-b { width: 156px; margin-left: 5px; }
.t0 { margin-left: 10px; flex: none; } .k2 { margin-left: 4px; }
.t1 { margin-left: 9px; flex: none; }
.t2 { margin-left: 7px; flex: none; }
.k3 { margin-left: 6px; }
.t3 { margin-left: 9px; flex: none; }
.t4 { margin-left: 6px; flex: none; }
.vsep.s2 { margin-left: 10px; }
.hl { display: flex; align-items: center; justify-content: center; width: 20px; height: 22px; margin-left: 9px; background: #cbe5ec; border: 1px solid #b7dae2; }
.t5 { margin-left: 6px; flex: none; }
.t6 { margin-left: 10px; flex: none; }
.vsep.s3 { margin-left: 6px; }
.t7 { margin-left: 9px; flex: none; }
.vsep.s4 { margin-left: 7px; }

.work { display: flex; height: 861px; }
.leftcol { width: 1430px; flex: none; display: flex; flex-direction: column; }
.tabstrip { height: 45px; display: flex; align-items: flex-end; }
.doctab { display: flex; align-items: center; gap: 3px; width: 98px; height: 24px; padding-left: 4px; background: #05658d; color: #fff; font-size: 12px; }
.tabicon { color: #fff; }
.doctab span { margin-right: 4px; }
.tx { margin-left: 5px; }
.canvas { flex: 1; position: relative; overflow: hidden; }
.scene { display: block; }

.sidetools { width: 36px; flex: none; display: flex; flex-direction: column; align-items: center; padding-top: 32px; border-right: 2px solid #aaa; color: #222; }
.st { flex: none; }
.sh { width: 27px; height: 1px; margin: 2px 0 11px; border: 0; background: #ccc; flex: none; }
.sc { margin: 3px 0 8px; }
.stv { flex: none; }
.sh.s2b { margin-top: 10px; }
.tinyleft { align-self: flex-start; margin: auto 0 6px 8px; flex: none; }

.nav { width: 422px; flex: none; padding: 0 6px 0 8px; display: flex; flex-direction: column; }
.navtitle { display: flex; align-items: center; height: 49px; padding: 21px 0 0 3px; gap: 10px; font-size: 12px; white-space: nowrap; }
.tbl { width: 408px; height: 751px; border: 2px solid #dedede; display: flex; flex-direction: column; }
.thead { display: flex; height: 20px; background: #f0f0f0; border-bottom: 1px solid #ddd; line-height: 21px; flex: none; }
.thead span { border-right: 1px solid #dcdcdc; padding-left: 7px; white-space: nowrap; overflow: hidden; flex: none; }
.thead .col0 { padding-left: 6px; }
.col0 { width: 200px; } .col1 { width: 45px; } .col2 { width: 32px; } .col3 { width: 46px; } .col4 { width: 50px; } .col5 { width: 31px; }
.tbody { flex: 1; overflow: hidden; }
.tr { display: flex; height: 20px; border-bottom: 1px solid #ececec; background: #fff; }
.tr.alt { background: #f8f8f8; }
.tr.chosen { background: #89bccf; }
.tr > span { border-right: 1px solid #ececec; white-space: nowrap; overflow: hidden; line-height: 20px; flex: none; }
.tr.chosen > span { border-right-color: #fff; }
.nm { display: flex; align-items: center; padding-left: 3px; gap: 3px; font-size: 12px; letter-spacing: .2px; }
.nt { font-weight: 400; padding-top: 1px; }
.nm.op { padding-left: 0; gap: 2px; color: #7372d6; }
.nm.unused, .nm.prog, .nm.yp { padding-left: 0; }
.pf { flex: none; }
.v { padding-left: 4px; color: #7372d6; letter-spacing: .2px; }
.tr .col2.v { padding-left: 6px; }
.tr .col5.v { padding-left: 5px; }
.tr.chosen .nm, .tr.chosen .v { color: #111; }
.ctr { display: flex; align-items: center; }
.bitc { padding-left: 9px; }
.chkc { padding-left: 5px; }
.hscroll { display: flex; align-items: center; height: 15px; background: #f0f0f0; padding-left: 6px; flex: none; }
.thumb { display: flex; align-items: center; justify-content: center; width: 161px; height: 14px; margin-left: 6px; background: linear-gradient(#eee, #c6c6c6); border: 1px solid #9b9b9b; font-size: 8px; color: #444; }
.rarrow { margin-left: auto; margin-right: 7px; }
.thickline { height: 4px; margin-top: 2px; width: 408px; background: #dcdcdc; border: 1px solid #b5b5b5; flex: none; }
.pane { display: flex; align-items: center; width: 408px; height: 24px; padding: 4px 0 0 11px; gap: 10px; border-bottom: 2px solid #cfcfcf; color: #05709b; font-size: 13px; flex: none; }
.tri { width: 0; height: 0; border-left: 5px solid #05709b; border-top: 4px solid transparent; border-bottom: 4px solid transparent; }

.rail { width: 17px; flex: none; display: flex; flex-direction: column; padding-top: 21px; overflow: hidden; }
.railblock { height: 166px; background: #dedede; border-left: 1px solid #bbb; flex: none; overflow: hidden; }
.railblock.grow { flex: 1; }
.railwhite { height: 45px; flex: none; padding: 5px 0 0 1px; }
.ri { display: block; margin-left: 1px; max-width: none; flex: none; }

.bottomline { height: 1px; background: #666; }

/* dialog */
.dlg { position: absolute; left: 758px; top: 194px; width: 328px; height: 712px; background: #eee; border: 1px solid #d8d8d8; border-top: 0; z-index: 5; }
.dlg-title { display: flex; align-items: center; height: 24px; margin: 0 -1px; padding-left: 7px; gap: 6px; background: #04618a; color: #fff; font-size: 14px; }
.dlg-title .q { margin-left: auto; font: 700 16px "Liberation Sans", sans-serif; }
.dlg-title .x { margin: 0 9px 0 12px; }
.dlg-body { padding: 4px 5px 0; }
.sec { background: #fff; border-bottom: 1px solid #c9c9c9; padding: 0 9px; margin-bottom: 3px; }
.s1h { height: 324px; }
.s2h { height: 144px; }
.s3h { height: 164px; }
.head { display: flex; align-items: center; height: 26px; margin: 0; padding-bottom: 2px; gap: 8px; font-size: 14px; font-weight: 400; color: #05709b; }
.dn { width: 0; height: 0; border: 4px solid transparent; border-top: 5px solid #05709b; border-bottom: 0; }
.listbox { height: 145px; margin-top: 4px; border: 1px solid #7b7b7b; padding: 1px; }
.li { height: 18px; line-height: 17px; padding-left: 1px; background: #89bccf; font-size: 12px; color: #111; }
.brow { display: flex; align-items: center; justify-content: space-between; white-space: nowrap; }
.ibtn { display: flex; align-items: center; justify-content: center; width: 32px; height: 32px; padding: 0; background: #fff; border: 1px solid #8a8a8a; }
.s1h > .brow { height: 34px; margin-top: 1px; }
.s1h > .brow span { margin-top: -12px; }
.center-sec { height: 105px; margin-top: 1px; padding: 0 8px 0 7px; background: #efefef; border: 1px solid #dbdbdb; }
.head.sub { height: 23px; gap: 8px; font-size: 12px; }
.center-sec .dn { border-width: 4px; border-top-width: 4px; }
.center-sec .ibtn { background: #efefef; }
.b1 { height: 33px; margin-top: 6px; }
.b1 span { margin-top: -12px; }
.b2 { height: 33px; margin-top: 1px; }
.flab { height: 27px; line-height: 29px; }
.inp { height: 23px; border: 1px solid #7b7b7b; padding-left: 4px; line-height: 21px; font-size: 12px; }
.inp.small { width: 82px; height: 24px; }
.brow.ext { height: 24px; margin-top: 2px; }
.brow.ext span { margin-top: -2px; }
.brow.br2 { height: 32px; margin-top: 2px; }
.brow.br2 span { margin-top: -4px; }
.dd { display: flex; align-items: center; justify-content: space-between; width: 99px; height: 25px; padding: 0 6px 0 4px; border: 1px solid #7b7b7b; font-size: 12px; background: #fff; }
.r25 { height: 25px; }
.s3h .head { height: 24px; margin-bottom: 6px; }
.m1 { margin-top: 1px; } .m2 { margin-top: 2px; }
.cb { display: flex; align-items: center; gap: 6px; height: 23px; font-size: 12px; }
.cb.first { margin-top: 1px; }
.box { display: flex; align-items: center; justify-content: center; width: 12px; height: 12px; border: 1px solid #888; background: #f2f2f2; }
.actions { display: flex; justify-content: flex-end; gap: 5px; padding: 8px 11px 0 0; }
.actions button { width: 54px; height: 25px; padding: 0; background: #fff; border: 1px solid #005f87; color: #05709b; font: 12px "Noto Sans CJK SC", sans-serif; }
.actions .primary { background: #04618a; color: #fff; }
</style>
